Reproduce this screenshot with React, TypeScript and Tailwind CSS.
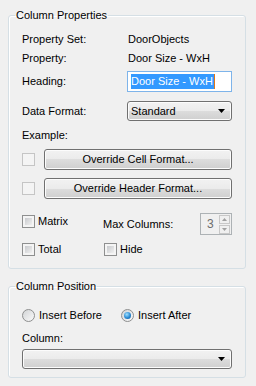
import React from 'react';

function CheckBox({ disabled }: { disabled?: boolean }) {
  if (disabled) {
    return <span className="block w-[13px] h-[13px] shrink-0 border border-[#c5c5c5] bg-[#f4f4f4]" />;
  }
  return (
    <span className="block w-[13px] h-[13px] shrink-0 border border-[#8e8f8f] bg-[#f4f4f4] p-[2px]">
      <span className="block w-full h-full bg-gradient-to-br from-[#c8cacd] to-[#f0f0f0]" />
    </span>
  );
}

function Radio({ checked }: { checked?: boolean }) {
  return (
    <span className="flex items-center justify-center w-[13px] h-[13px] shrink-0 rounded-full border border-[#8e8f8f] bg-gradient-to-br from-[#d2d4d6] to-[#fafafa]">
      {checked && (
        <span className="block w-[7px] h-[7px] rounded-full bg-[radial-gradient(circle_at_40%_35%,#9fe0ff,#2a8ad4_55%,#0b4f8f)]" />
      )}
    </span>
  );
}

function Button({ label }: { label: string }) {
  return (
    <div className="flex-1 h-[21px] rounded-[3px] border border-[#707070] bg-[linear-gradient(#f2f2f2_0%,#ebebeb_50%,#dddddd_50%,#cfcfcf_100%)] shadow-[inset_0_0_0_1px_#fcfcfc] flex items-center justify-center">
      {label}
    </div>
  );
}

function Select({ value }: { value?: string }) {
  return (
    <div className="h-[20px] flex-1 rounded-[3px] border border-[#707070] bg-[linear-gradient(#f2f2f2_0%,#ebebeb_50%,#dddddd_50%,#cfcfcf_100%)] shadow-[inset_0_0_0_1px_#fcfcfc] flex items-center pl-[3px] pr-[6px]">
      <span className="flex-1">{value}</span>
      <svg width="7" height="4" viewBox="0 0 7 4">
        <path d="M0 0h7L3.5 4z" fill="#000" />
      </svg>
    </div>
  );
}

export default function App() {
  return (
    <div className="w-[256px] h-[386px] bg-[#f0f0f0] pt-[9px] pl-[8px] pr-[10px] font-['Liberation_Sans',Arial,sans-serif] text-[11px] leading-[13px] text-black">
      <fieldset className="border border-[#d5dfe5] rounded-[3px] shadow-[inset_1px_1px_0_#ffffff]">
        <legend className="ml-[6px] px-[1px] leading-[13px]">Column Properties</legend>
        <div className="pl-[13px] pr-[13px] pt-[11px] pb-[12px]">
          <div className="flex h-[13px]">
            <span className="w-[106px]">Property Set:</span>
            <span>DoorObjects</span>
          </div>
          <div className="flex h-[13px] mt-[6px]">
            <span className="w-[106px]">Property:</span>
            <span>Door Size - WxH</span>
          </div>
          <div className="flex items-center h-[21px] mt-[6px]">
            <span className="w-[105px]">Heading:</span>
            <div className="flex-1 h-[21px] border border-[#7eb4ea] bg-white flex items-center pl-[3px]">
              <span className="bg-[#3399ff] text-white leading-[15px] pr-[1px]">Door Size - WxH</span>
              <span className="block w-[1px] h-[15px] bg-[#e0761a]" />
            </div>
          </div>
          <div className="flex items-center h-[20px] mt-[9px]">
            <span className="w-[105px]">Data Format:</span>
            <Select value="Standard" />
          </div>
          <div className="h-[13px] mt-[8px]">Example:</div>
          <div className="flex items-center gap-[9px] mt-[7px]">
            <CheckBox disabled />
            <Button label="Override Cell Format..." />
          </div>
          <div className="flex items-center gap-[9px] mt-[8px]">
            <CheckBox disabled />
            <Button label="Override Header Format..." />
          </div>
          <div className="flex items-start h-[22px] mt-[14px]">
            <div className="w-[81px] flex items-center gap-[3px] mt-[2px]">
              <CheckBox />
              <span>Matrix</span>
            </div>
            <span className="flex-1 self-center">Max Columns:</span>
            <div className="w-[32px] h-[22px] border border-[#adb2b5] flex items-center pl-[6px] pr-[1px] text-[#6d6d6d]">
              <span className="flex-1 text-[12px]">3</span>
              <div className="flex flex-col gap-[1px]">
                <span className="w-[11px] h-[9px] border border-[#c8c8c8] flex items-center justify-center">
                  <svg width="5" height="3" viewBox="0 0 5 3"><path d="M0 3h5L2.5 0z" fill="#a0a0a0" /></svg>
                </span>
                <span className="w-[11px] h-[9px] border border-[#c8c8c8] flex items-center justify-center">
                  <svg width="5" height="3" viewBox="0 0 5 3"><path d="M0 0h5L2.5 3z" fill="#a0a0a0" /></svg>
                </span>
              </div>
            </div>
          </div>
          <div className="flex items-center h-[13px] mt-[8px]">
            <div className="w-[82px] flex items-center gap-[3px]">
              <CheckBox />
              <span>Total</span>
            </div>
            <div className="flex items-center gap-[3px]">
              <CheckBox />
              <span>Hide</span>
            </div>
          </div>
        </div>
      </fieldset>
      <fieldset className="mt-[11px] border border-[#d5dfe5] rounded-[3px] shadow-[inset_1px_1px_0_#ffffff]">
        <legend className="ml-[6px] px-[1px] leading-[13px]">Column Position</legend>
        <div className="pl-[13px] pr-[13px] pt-[16px] pb-[8px]">
          <div className="flex items-center h-[13px]">
            <div className="w-[99px] flex items-center gap-[4px]">
              <Radio />
              <span>Insert Before</span>
            </div>
            <div className="flex items-center gap-[4px]">
              <Radio checked />
              <span>Insert After</span>
            </div>
          </div>
          <div className="h-[13px] mt-[10px]">Column:</div>
          <div className="flex mt-[4px]">
            <Select />
          </div>
        </div>
      </fieldset>
    </div>
  );
}
